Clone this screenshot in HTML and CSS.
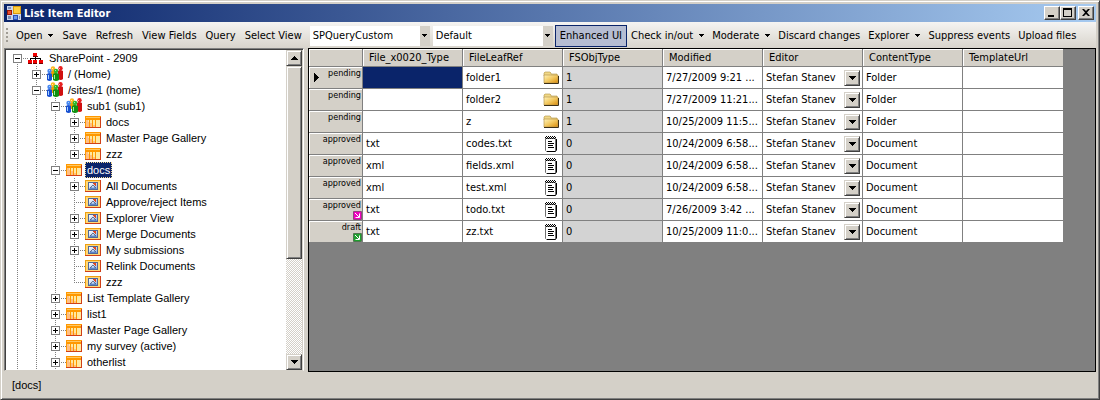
FILE: index.html
```html
<!DOCTYPE html>
<html lang="en">
<head>
<meta charset="utf-8">
<title>List Item Editor</title>
<link rel="stylesheet" href="styles.css">
</head>
<body>
<svg class="defs" aria-hidden="true">
  <defs>
    <linearGradient id="gold" x1="0" y1="0" x2="1" y2="1"><stop offset="0" stop-color="#fff3b8"/><stop offset=".5" stop-color="#f2c860"/><stop offset="1" stop-color="#d98a08"/></linearGradient>
    <linearGradient id="sky" x1="0" y1="0" x2="1" y2="1"><stop offset="0" stop-color="#ffffff"/><stop offset="1" stop-color="#8fb4e4"/></linearGradient>
    <symbol id="i-farm" viewBox="0 0 16 16"><path d="M7 5h1v3H7zM2 8h11v1H2zM2 8h1v3H2zM12 8h1v3h-1zM7 8h1v3H7z" fill="#000"/><path d="M5 3h4v3H5zM0 10h4v3H0zM5 10h4v3H5zM11 10h4v3h-4z" fill="#f00000"/><path d="M0 13h4v1H0zM5 13h4v1H5zM11 13h4v1h-4zM5 6h5v1H5z" fill="#700000"/></symbol>
    <symbol id="i-site" viewBox="0 0 16 16">
      <path d="M4 5q2.500-2 5 0v6H4z" fill="#f0a000"/><circle cx="6" cy="2.500" r="2.200" fill="#ffb820"/>
      <path d="M11 5q2-2 5 0v8q-2 2-5 0z" fill="#d01010"/><circle cx="13.500" cy="2.300" r="2.200" fill="#e82020"/>
      <path d="M0 8q2.500-2 5 0v6q-2.500 2-5 0z" fill="#1850d0"/><circle cx="2.500" cy="5" r="2.200" fill="#4888f0"/>
      <path d="M6 8q3-2 6 0v6q-3 2-6 0z" fill="#109010"/><circle cx="9" cy="5" r="2.300" fill="#30b830"/>
      <path d="M1 9h1v4H1zM2 4h1v1H2z" fill="#a8d0ff"/><path d="M7 9h1v4H7zM8 4h1v1H8z" fill="#a0f0a0"/><path d="M5 2h1v1H5z" fill="#fff0b0"/><path d="M12 2h1v1h-1z" fill="#ffb0a0"/>
    </symbol>
    <symbol id="i-list" viewBox="0 0 16 16"><path d="M0 2h16v12H0z" fill="#ff9800"/><path d="M1 3h14v1H1z" fill="#ffc860"/><path d="M1 6h3v7H1zM5 6h2v7H5zM8 6h2v7H8zM11 6h4v7h-4z" fill="#ffe9a0"/><path d="M1 6h2v2H1zM1 8h3v5H1zM5 9h2v4H5zM8 11h2v2H8z" fill="#ffbf85"/><path d="M15 3h1v11h-1zM0 13h16v1H0z" fill="#d04018"/></symbol>
    <symbol id="i-view" viewBox="0 0 16 16"><path d="M0 2h16v12H0z" fill="#f0a010"/><path d="M1 3h14v10H1z" fill="#ffd878"/><path d="M15 2h1v12h-1zM0 13h16v1H0z" fill="#d04018"/><path d="M3 4h10v8H3z" fill="#506898"/><path d="M4 5h8v6H4z" fill="url(#sky)"/><path d="M4 11l2-2 2 1 2-1 2 2z" fill="#5c88c8"/><path d="M8 5h3v3h-1V7H9V6H8z" fill="#e04820"/><path d="M5 10l3-3M8 7l3 3" stroke="#505878" fill="none" stroke-width=".8"/></symbol>
    <symbol id="i-folder" viewBox="0 0 16 16"><path d="M1 3l1-1h5l1 1v1h6v2H1z" fill="#f0d888" stroke="#b09040" stroke-width=".6"/><path d="M1 5h14v8H1z" fill="url(#gold)" stroke="#b89850" stroke-width=".7"/><path d="M1 13.500h14.500V6" stroke="#3c3018" fill="none"/></symbol>
    <symbol id="i-text" viewBox="0 0 16 16"><path d="M2.500 2.500h10v12l-1 1h-8l-1-1z" fill="#fff" stroke="#707070"/><path d="M13.500 3v11l-1 1.500H4" stroke="#000" fill="none"/><path d="M3 0h1v1H3zM5 0h1v1H5zM7 0h1v1H7zM9 0h1v1H9zM11 0h1v1h-1zM2 1h1v1H2zM4 1h1v1H4zM6 1h1v1H6zM8 1h1v1H8zM10 1h1v1h-1zM12 1h1v1h-1zM3 2h1v1H3zM5 2h1v1H5zM7 2h1v1H7zM9 2h1v1H9zM11 2h1v1h-1z" fill="#000"/><path d="M5 5h4v1H5zM5 7h6v1H5zM5 9h5v1H5zM5 11h6v1H5z" fill="#000"/></symbol>
    <symbol id="i-out" viewBox="0 0 9 9"><path d="M.5.5h8v8h-8z" fill="currentColor" stroke="#000" stroke-opacity=".35"/><path d="M2 2l4 4M6.500 2.500v4h-4" stroke="#fff" fill="none"/></symbol>
    <symbol id="i-down" viewBox="0 0 7 4"><path d="M0 0h7v1H0zM1 1h5v1H1zM2 2h3v1H2zM3 3h1v1H3z"/></symbol>
    <symbol id="i-drop" viewBox="0 0 5 3"><path d="M0 0h5v1H0zM1 1h3v1H1zM2 2h1v1H2z"/></symbol>
  </defs>
</svg>

<div class="window">
  <header class="titlebar">
    <svg class="app-icon" viewBox="0 0 16 16" aria-hidden="true"><path d="M1 1h14v14H1z" fill="#cdd6ea"/><path d="M7 1h8v8H7z" fill="#d89a10"/><path d="M8 2h6v6H8z" fill="#ffcf40"/><path d="M1 5h5v5H1z" fill="#a01808"/><path d="M2 6h3v3H2z" fill="#e85030"/><path d="M7 10h5v5H7z" fill="#2a50b8"/><path d="M8 11h3v3H8z" fill="#6898f0"/><path d="M2 2h3v2H2zM2 11h3v3H2zM13 11h1v3h-1z" fill="#8090b8"/></svg>
    <h1 class="title">List Item Editor</h1>
    <div class="caption-buttons">
      <button class="caption" aria-label="Minimize"><svg viewBox="0 0 12 10"><path d="M2 7h6v2H2z"/></svg></button>
      <button class="caption" aria-label="Maximize"><svg viewBox="0 0 12 10"><path d="M1 0h9v9H1zM2 2v6h7V2z" fill-rule="evenodd"/></svg></button>
      <button class="caption close" aria-label="Close"><svg viewBox="0 0 12 10"><path d="M2 1h2l2 2 2-2h2L7 4.500 10 8H8L6 6 4 8H2l3-3.500z"/></svg></button>
    </div>
  </header>

  <div class="toolbar" role="toolbar">
    <span class="grip"></span>
    <div class="tools wide">
      <button class="tool">Open<svg><use href="#i-drop"/></svg></button>
      <button class="tool">Save</button>
      <button class="tool">Refresh</button>
      <button class="tool">View Fields</button>
      <button class="tool">Query</button>
      <button class="tool">Select View</button>
    </div>
    <div class="combos">
      <span class="combo"><select aria-label="Query type"><option>SPQueryCustom</option></select><span class="combo-arrow"><svg><use href="#i-drop"/></svg></span></span>
      <span class="combo"><select aria-label="View"><option>Default</option></select><span class="combo-arrow"><svg><use href="#i-drop"/></svg></span></span>
    </div>
    <div class="tools">
      <button class="tool pressed" aria-pressed="true">Enhanced UI</button>
      <button class="tool">Check in/out<svg><use href="#i-drop"/></svg></button>
      <button class="tool">Moderate<svg><use href="#i-drop"/></svg></button>
      <button class="tool">Discard changes</button>
      <button class="tool">Explorer<svg><use href="#i-drop"/></svg></button>
      <button class="tool">Suppress events</button>
      <button class="tool">Upload files</button>
    </div>
  </div>

  <main class="panes">
    <nav class="tree-pane" aria-label="Sites">
      <ul class="tree">
        <li class="root"><div class="node"><button class="box minus" aria-label="Collapse"></button><svg><use href="#i-farm"/></svg><span>SharePoint - 2909</span></div>
          <ul>
            <li><div class="node"><button class="box plus" aria-label="Expand"></button><svg><use href="#i-site"/></svg><span>/ (Home)</span></div></li>
            <li><div class="node"><button class="box minus" aria-label="Collapse"></button><svg><use href="#i-site"/></svg><span>/sites/1 (home)</span></div>
              <ul>
                <li><div class="node"><button class="box minus" aria-label="Collapse"></button><svg><use href="#i-site"/></svg><span>sub1 (sub1)</span></div>
                  <ul>
                    <li><div class="node"><button class="box plus" aria-label="Expand"></button><svg><use href="#i-list"/></svg><span>docs</span></div></li>
                    <li><div class="node"><button class="box plus" aria-label="Expand"></button><svg><use href="#i-list"/></svg><span>Master Page Gallery</span></div></li>
                    <li class="last"><div class="node"><button class="box plus" aria-label="Expand"></button><svg><use href="#i-list"/></svg><span>zzz</span></div></li>
                  </ul>
                </li>
                <li><div class="node selected"><button class="box minus" aria-label="Collapse"></button><svg><use href="#i-list"/></svg><span>docs</span></div>
                  <ul>
                    <li><div class="node"><button class="box plus" aria-label="Expand"></button><svg><use href="#i-view"/></svg><span>All Documents</span></div></li>
                    <li><div class="node"><svg><use href="#i-view"/></svg><span>Approve/reject Items</span></div></li>
                    <li><div class="node"><button class="box plus" aria-label="Expand"></button><svg><use href="#i-view"/></svg><span>Explorer View</span></div></li>
                    <li><div class="node"><button class="box plus" aria-label="Expand"></button><svg><use href="#i-view"/></svg><span>Merge Documents</span></div></li>
                    <li><div class="node"><button class="box plus" aria-label="Expand"></button><svg><use href="#i-view"/></svg><span>My submissions</span></div></li>
                    <li><div class="node"><svg><use href="#i-view"/></svg><span>Relink Documents</span></div></li>
                    <li class="last"><div class="node"><svg><use href="#i-view"/></svg><span>zzz</span></div></li>
                  </ul>
                </li>
                <li><div class="node"><button class="box plus" aria-label="Expand"></button><svg><use href="#i-list"/></svg><span>List Template Gallery</span></div></li>
                <li><div class="node"><button class="box plus" aria-label="Expand"></button><svg><use href="#i-list"/></svg><span>list1</span></div></li>
                <li><div class="node"><button class="box plus" aria-label="Expand"></button><svg><use href="#i-list"/></svg><span>Master Page Gallery</span></div></li>
                <li><div class="node"><button class="box plus" aria-label="Expand"></button><svg><use href="#i-list"/></svg><span>my survey (active)</span></div></li>
                <li><div class="node"><button class="box plus" aria-label="Expand"></button><svg><use href="#i-list"/></svg><span>otherlist</span></div></li>
              </ul>
            </li>
          </ul>
        </li>
      </ul>
      <div class="scrollbar">
        <button class="raised up" aria-label="Scroll up"><svg><use href="#i-down"/></svg></button>
        <div class="raised thumb"></div>
        <div class="track"></div>
        <button class="raised" aria-label="Scroll down"><svg><use href="#i-down"/></svg></button>
      </div>
    </nav>

    <section class="grid-pane">
      <table class="grid">
        <thead>
          <tr><th class="corner"></th><th>File_x0020_Type</th><th>FileLeafRef</th><th>FSObjType</th><th>Modified</th><th>Editor</th><th>ContentType</th><th>TemplateUrl</th></tr>
        </thead>
        <tbody>
          <tr><th><div class="state"><svg class="current" viewBox="0 0 5 9"><path d="M0 0h1v9H0zM1 1h1v7H1zM2 2h1v5H2zM3 3h1v3H3zM4 4h1v1H4z"/></svg>pending</div></th><td class="active"></td><td><div class="file">folder1<svg><use href="#i-folder"/></svg></div></td><td class="locked">1</td><td>7/27/2009 9:21 ...</td><td><div class="editor"><select aria-label="Editor"><option>Stefan Stanev</option></select><span class="raised"><svg><use href="#i-down"/></svg></span></div></td><td>Folder</td><td></td></tr>
          <tr><th><div class="state">pending</div></th><td></td><td><div class="file">folder2<svg><use href="#i-folder"/></svg></div></td><td class="locked">1</td><td>7/27/2009 11:21...</td><td><div class="editor"><select aria-label="Editor"><option>Stefan Stanev</option></select><span class="raised"><svg><use href="#i-down"/></svg></span></div></td><td>Folder</td><td></td></tr>
          <tr><th><div class="state">pending</div></th><td></td><td><div class="file">z<svg><use href="#i-folder"/></svg></div></td><td class="locked">1</td><td>10/25/2009 11:5...</td><td><div class="editor"><select aria-label="Editor"><option>Stefan Stanev</option></select><span class="raised"><svg><use href="#i-down"/></svg></span></div></td><td>Folder</td><td></td></tr>
          <tr><th><div class="state">approved</div></th><td>txt</td><td><div class="file">codes.txt<svg><use href="#i-text"/></svg></div></td><td class="locked">0</td><td>10/24/2009 6:58...</td><td><div class="editor"><select aria-label="Editor"><option>Stefan Stanev</option></select><span class="raised"><svg><use href="#i-down"/></svg></span></div></td><td>Document</td><td></td></tr>
          <tr><th><div class="state">approved</div></th><td>xml</td><td><div class="file">fields.xml<svg><use href="#i-text"/></svg></div></td><td class="locked">0</td><td>10/24/2009 6:58...</td><td><div class="editor"><select aria-label="Editor"><option>Stefan Stanev</option></select><span class="raised"><svg><use href="#i-down"/></svg></span></div></td><td>Document</td><td></td></tr>
          <tr><th><div class="state">approved</div></th><td>xml</td><td><div class="file">test.xml<svg><use href="#i-text"/></svg></div></td><td class="locked">0</td><td>10/24/2009 6:58...</td><td><div class="editor"><select aria-label="Editor"><option>Stefan Stanev</option></select><span class="raised"><svg><use href="#i-down"/></svg></span></div></td><td>Document</td><td></td></tr>
          <tr><th><div class="state">approved<svg class="out mine"><use href="#i-out"/></svg></div></th><td>txt</td><td><div class="file">todo.txt<svg><use href="#i-text"/></svg></div></td><td class="locked">0</td><td>7/26/2009 3:42 ...</td><td><div class="editor"><select aria-label="Editor"><option>Stefan Stanev</option></select><span class="raised"><svg><use href="#i-down"/></svg></span></div></td><td>Document</td><td></td></tr>
          <tr><th><div class="state">draft<svg class="out"><use href="#i-out"/></svg></div></th><td>txt</td><td><div class="file">zz.txt<svg><use href="#i-text"/></svg></div></td><td class="locked">0</td><td>10/25/2009 11:0...</td><td><div class="editor"><select aria-label="Editor"><option>Stefan Stanev</option></select><span class="raised"><svg><use href="#i-down"/></svg></span></div></td><td>Document</td><td></td></tr>
        </tbody>
      </table>
    </section>
  </main>

  <footer class="status">[docs]</footer>
</div>
</body>
</html>
```

FILE: styles.css
```css
* { box-sizing: border-box; }

body {
  margin: 0;
  background: #d4d0c8;
  color: #000;
  font: 11px/14px "DejaVu Sans Condensed", "Liberation Sans", sans-serif;
}

button, select {
  margin: 0;
  padding: 0;
  border: 0;
  border-radius: 0;
  background: none;
  color: inherit;
  font: inherit;
}

.defs { position: absolute; width: 0; height: 0; }

.window {
  display: flex;
  flex-direction: column;
  min-height: 100vh;
  padding: 2px;
  border: 1px solid #d4d0c8;
  border-right-color: #404040;
  border-bottom-color: #404040;
  box-shadow: inset 1px 1px #fff, inset -1px -1px #808080;
}

/* Title bar */
.titlebar {
  display: flex;
  align-items: center;
  height: 18px;
  margin: 1px 1px 0;
  padding: 0 2px;
  background: linear-gradient(to right, #0a246a, #a6caf0);
}
.app-icon { width: 16px; height: 16px; }
.title {
  flex: 1;
  margin: 1px 0 0 2px;
  color: #fff;
  font-size: 11px;
  font-weight: bold;
}
.caption-buttons { display: flex; }
.caption, .raised {
  background: #d4d0c8;
  border: 1px solid;
  border-color: #d4d0c8 #404040 #404040 #d4d0c8;
  box-shadow: inset 1px 1px #fff, inset -1px -1px #808080;
}
.caption {
  width: 16px;
  height: 14px;
  border-color: #fff #404040 #404040 #fff;
  box-shadow: inset -1px -1px #808080;
}
.caption svg { display: block; width: 12px; height: 10px; margin: 1px; }
.close { margin-left: 2px; }

/* Toolbar */
.toolbar {
  display: flex;
  align-items: center;
  height: 26px;
  margin: 0 1px;
  padding: 1px 0 0 2px;
  background: linear-gradient(#f5f4f2, #d8d4cc);
  white-space: nowrap;
}
.grip {
  width: 2px;
  height: 16px;
  margin-right: 3px;
  background: repeating-linear-gradient(#a09c94 0 2px, transparent 2px 4px);
}
.tools, .combos { display: flex; flex: none; }
.combos { gap: 3px; margin: 0 2px 0 4px; }
.tool {
  display: flex;
  align-items: center;
  height: 22px;
  padding: 0 4px;
}
.wide .tool { padding: 0 4px 0 5px; }
.tool svg { width: 5px; height: 3px; margin-left: 6px; }
.combo {
  position: relative;
  width: 120px;
  height: 20px;
}
.combo select {
  appearance: none;
  width: 100%;
  height: 100%;
  padding: 0 14px 0 3px;
  background: #fff;
}
.combo-arrow {
  position: absolute;
  top: 0;
  right: 0;
  bottom: 0;
  display: grid;
  place-items: center;
  width: 10px;
  background: #d4d0c8;
  pointer-events: none;
}
.combo-arrow svg { width: 5px; height: 3px; }
.pressed {
  border: 1px solid #0a246a;
  background: #b6bdd2;
}

/* Panes */
.panes {
  display: flex;
  flex: 1;
  gap: 4px;
  margin: 0 1px;
}
.tree-pane {
  display: flex;
  width: 300px;
  height: 323px;
  border: 1px solid #808080;
  border-color: #808080 #fff #d4d0c8 #808080;
  box-shadow: inset 1px 1px #404040;
  padding: 1px 1px 0 1px;
  overflow: hidden;
  font-family: "Liberation Sans", sans-serif;
}
.tree {
  flex: 1;
  height: 100%;
  margin: 0;
  padding: 0 0 0 2px;
  background: #fff;
  list-style: none;
}
.tree ul { margin: 0; padding: 0 0 0 19px; list-style: none; }
.tree li {
  background: repeating-linear-gradient(#808080 0 1px, transparent 1px 2px) 9px 0 / 1px 100% no-repeat;
}
.tree .root { background-position: 9px 8px; }
.tree .last { background-size: 1px 8px; }
.node {
  display: flex;
  align-items: center;
  height: 16px;
  padding-left: 20px;
  background: repeating-linear-gradient(to right, #808080 0 1px, transparent 1px 2px) 9px 8px / 11px 1px no-repeat;
  white-space: nowrap;
}
.box {
  width: 9px;
  height: 9px;
  margin: 0 6px 0 -15px;
  border: 1px solid #808080;
}
.minus { background: linear-gradient(#000, #000) center / 5px 1px no-repeat #fff; }
.plus {
  background:
    linear-gradient(#000, #000) center / 5px 1px no-repeat,
    linear-gradient(#000, #000) center / 1px 5px no-repeat,
    #fff;
}
.node svg { width: 16px; height: 16px; }
.node span { height: 16px; margin-left: 3px; padding: 0 2px; line-height: 16px; }
.selected span {
  background: #0a246a;
  color: #fff;
  outline: 1px dotted #f5db95;
  outline-offset: -1px;
}

.scrollbar { display: flex; flex-direction: column; width: 16px; }
.raised { display: grid; place-items: center; width: 16px; height: 16px; }
.raised svg { width: 7px; height: 4px; }
.up svg { transform: rotate(180deg); }
.thumb { height: 193px; }
.track {
  flex: 1;
  background: repeating-conic-gradient(#fff 0 25%, #d4d0c8 0 50%) 0 0 / 2px 2px;
}

.grid-pane {
  flex: 1;
  min-width: 0;
  border: 1px solid #000;
  background: #808080;
  overflow: hidden;
}

/* Data grid */
.grid {
  width: 754px;
  border-collapse: separate;
  border-spacing: 0;
  table-layout: fixed;
  background: #fff;
}
.grid th, .grid td {
  width: 100px;
  height: 22px;
  padding: 1px 0 0 3px;
  border: 0 solid #808080;
  border-width: 0 1px 1px 0;
  font-weight: normal;
  text-align: left;
  white-space: nowrap;
  overflow: hidden;
}
.grid th { background: #d4d0c8; }
.grid thead th {
  height: 18px;
  padding-left: 6px;
  box-shadow: inset 1px 1px #fff;
}
.grid .corner { width: 54px; }
.grid tbody th {
  padding: 0;
  box-shadow: inset 1px 1px #fff;
  vertical-align: top;
}
.grid tr > :last-child { border-right: 0; }
.grid tbody tr:last-child > * { height: 21px; border-bottom: 0; }
.grid .active { background: #0a246a; }
.grid .locked { background: #d3d3d3; }
.state {
  position: relative;
  height: 21px;
  padding-right: 1px;
  font: 9px/13px "DejaVu Sans Condensed", "Liberation Sans", sans-serif;
  text-align: right;
}
.current { position: absolute; left: 5px; top: 6px; width: 5px; height: 9px; }
.out { position: absolute; right: 0; bottom: 0; width: 9px; height: 9px; color: #20a030; }
.mine { color: #f000c0; }
.file { display: flex; align-items: center; justify-content: space-between; padding-right: 3px; }
.file svg { width: 16px; height: 16px; }
.editor { position: relative; display: flex; align-items: center; height: 20px; }
.editor select { appearance: none; width: 100%; height: 20px; padding-right: 20px; }
.editor .raised { position: absolute; right: 2px; top: 2px; pointer-events: none; }

.status { height: 25px; padding: 0 9px; line-height: 26px; font-family: "Liberation Sans", sans-serif; }
```
